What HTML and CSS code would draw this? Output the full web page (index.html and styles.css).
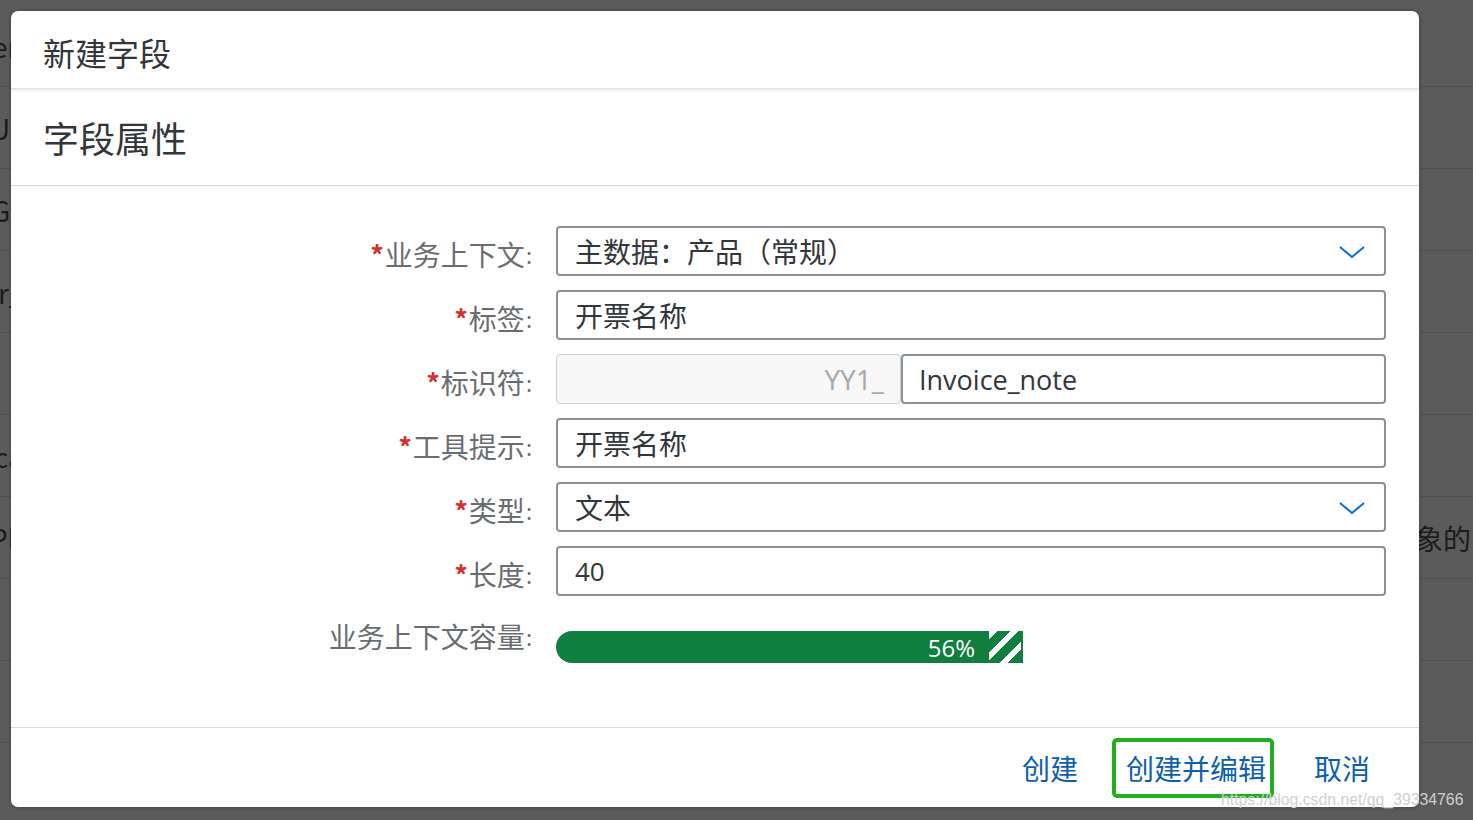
FILE: index.html
```html
<!DOCTYPE html>
<html lang="zh-CN">
<head>
<meta charset="utf-8">
<title>新建字段</title>
<link rel="stylesheet" href="styles.css">
</head>
<body>
<div class="page">
  <div class="bg-row"><span class="bg-left shift-er">er</span></div>
  <div class="bg-row"><span class="bg-left shift-u">U</span></div>
  <div class="bg-row"><span class="bg-left shift-g">G</span></div>
  <div class="bg-row"><span class="bg-left shift-r">r_</span></div>
  <div class="bg-row"></div>
  <div class="bg-row"><span class="bg-left shift-ca">ca</span></div>
  <div class="bg-row"><span class="bg-left shift-pl">Pl</span><span class="bg-right">对象的</span></div>
  <div class="bg-row"></div>
  <div class="bg-row"></div>
  <div class="bg-row"></div>
</div>

<div class="dialog">
  <div class="dlg-header">新建字段</div>
  <div class="section-title">字段属性</div>
  <div class="form">
    <div class="label"><span class="req">*</span>业务上下文<span class="colon">:</span></div>
    <div class="input select"><span>主数据：产品（常规）</span>
      <svg class="chev" width="28" height="16" viewBox="0 0 28 16"><path d="M2 3 L14 13 L26 3" fill="none" stroke="#0a6ed1" stroke-width="2"/></svg>
    </div>

    <div class="label"><span class="req">*</span>标签<span class="colon">:</span></div>
    <div class="input">开票名称</div>

    <div class="label"><span class="req">*</span>标识符<span class="colon">:</span></div>
    <div class="id-group">
      <div class="prefix">YY1_</div>
      <div class="input id-main">Invoice_note</div>
    </div>

    <div class="label"><span class="req">*</span>工具提示<span class="colon">:</span></div>
    <div class="input">开票名称</div>

    <div class="label"><span class="req">*</span>类型<span class="colon">:</span></div>
    <div class="input select"><span>文本</span>
      <svg class="chev" width="28" height="16" viewBox="0 0 28 16"><path d="M2 3 L14 13 L26 3" fill="none" stroke="#0a6ed1" stroke-width="2"/></svg>
    </div>

    <div class="label"><span class="req">*</span>长度<span class="colon">:</span></div>
    <div class="input num">40</div>

    <div class="label cap-label">业务上下文容量<span class="colon">:</span></div>
    <div class="progress">
      <div class="bar-fill">56%</div>
      <div class="bar-stripe"></div>
    </div>
  </div>
  <div class="footer">
    <span class="btn">创建</span>
    <span class="btn hl">创建并编辑</span>
    <span class="btn">取消</span>
  </div>
</div>

<div class="watermark">https://blog.csdn.net/qq_39334766</div>
</body>
</html>
```
FILE: styles.css
```css
* { box-sizing: border-box; }
html, body { margin: 0; padding: 0; }
body {
  width: 1473px;
  height: 820px;
  overflow: hidden;
  background: #5b5b5b;
  font-family: "Noto Sans CJK SC", "Noto Sans", sans-serif;
  position: relative;
}
.page {
  padding-top: 5px;
  border-top: 5px solid #525252;
  margin-top: -5px;
}
.bg-row {
  height: 82px;
  border-bottom: 1px solid #505050;
  display: flex;
  align-items: center;
  justify-content: space-between;
  font-size: 28px;
  color: #1c1c1c;
  white-space: nowrap;
  overflow: hidden;
}
.bg-left { display: block; }
.shift-er { margin-left: -8px; }
.shift-u { margin-left: -10px; }
.shift-g { margin-left: -9px; }
.shift-r { margin-left: -2px; }
.shift-ca { margin-left: -6px; }
.shift-pl { margin-left: -10px; }
.bg-right { padding-right: 2px; }

.dialog {
  position: absolute;
  left: 11px;
  top: 11px;
  width: 1408px;
  height: 796px;
  background: #fff;
  border-radius: 7px;
  box-shadow: 0 0 4px rgba(0,0,0,0.25);
  display: flex;
  flex-direction: column;
  color: #32363a;
}
.dlg-header {
  height: 78px;
  padding-left: 32px;
  padding-top: 4px;
  display: flex;
  align-items: center;
  font-size: 32px;
  color: #32363a;
  border-bottom: 1px solid #e0e0e0;
  box-shadow: 0 2px 3px rgba(0,0,0,0.08);
  position: relative;
  z-index: 1;
}
.section-title {
  height: 97px;
  padding-left: 32px;
  display: flex;
  align-items: center;
  font-size: 36px;
  color: #32363a;
  border-bottom: 1px solid #d9d9d9;
}
.form {
  flex: 1;
  display: grid;
  grid-template-columns: 521px 830px;
  column-gap: 24px;
  row-gap: 14px;
  grid-auto-rows: 50px;
  padding-top: 40px;
  align-content: start;
}
.label {
  font-size: 28px;
  color: #6a6d70;
  text-align: right;
  display: flex;
  align-items: center;
  justify-content: flex-end;
  padding-top: 6px;
}
.req { color: #d6302f; font-weight: bold; font-size: 27px; margin-right: 1px; }
.colon { margin-left: 1px; font-size: 22px; }
.input {
  height: 50px;
  border: 2px solid #89919a;
  border-radius: 4px;
  font-size: 28px;
  color: #32363a;
  padding: 0 17px;
  display: flex;
  align-items: center;
  white-space: nowrap;
}
.select { justify-content: space-between; padding-right: 18px; }
.chev { display: block; margin-top: 2px; }
.num, .id-main { font-family: "Open Sans", "Noto Sans", sans-serif; font-size: 26px; }
.id-main { font-size: 27px; padding-left: 16px; }
.id-group { display: flex; height: 50px; }
.prefix {
  width: 345px;
  height: 50px;
  background: #f7f7f7;
  border: 1px solid #ccd0d4;
  border-radius: 4px;
  color: #a9a9a9;
  font-family: "Open Sans", "Noto Sans", sans-serif;
  font-size: 28px;
  display: flex;
  align-items: center;
  justify-content: flex-end;
  padding-right: 16px;
}
.id-main { flex: 1; }
.cap-label { align-self: start; padding-top: 6px; }
.progress {
  display: flex;
  height: 32px;
  margin-top: 21px;
  width: 467px;
}
.bar-fill {
  width: 433px;
  background: #107e3e;
  border-radius: 16px 0 0 16px;
  color: #fff;
  font-family: "Open Sans", "Noto Sans", sans-serif;
  font-size: 24px;
  display: flex;
  align-items: center;
  justify-content: flex-end;
  padding-right: 14px;
}
.bar-stripe {
  width: 34px;
  border-right: 2px solid #107e3e;
  background: repeating-linear-gradient(135deg, #ffffff 0 6px, #107e3e 6px 15px);
}
.footer {
  height: 80px;
  border-top: 1px solid #d9d9d9;
  display: flex;
  align-items: center;
  justify-content: flex-end;
  gap: 48px;
  padding-right: 49px;
}
.btn {
  font-size: 28px;
  color: #0b5fae;
  line-height: 40px;
  position: relative;
}
.hl::after {
  content: "";
  position: absolute;
  left: -14px;
  right: -8px;
  top: -10px;
  bottom: -10px;
  border: 4px solid #1fae1f;
  border-radius: 5px;
}
.watermark {
  position: absolute;
  left: 1221px;
  top: 791px;
  font-family: "Liberation Sans", sans-serif;
  font-size: 15.8px;
  color: #cfcfcf;
  white-space: nowrap;
}
```
